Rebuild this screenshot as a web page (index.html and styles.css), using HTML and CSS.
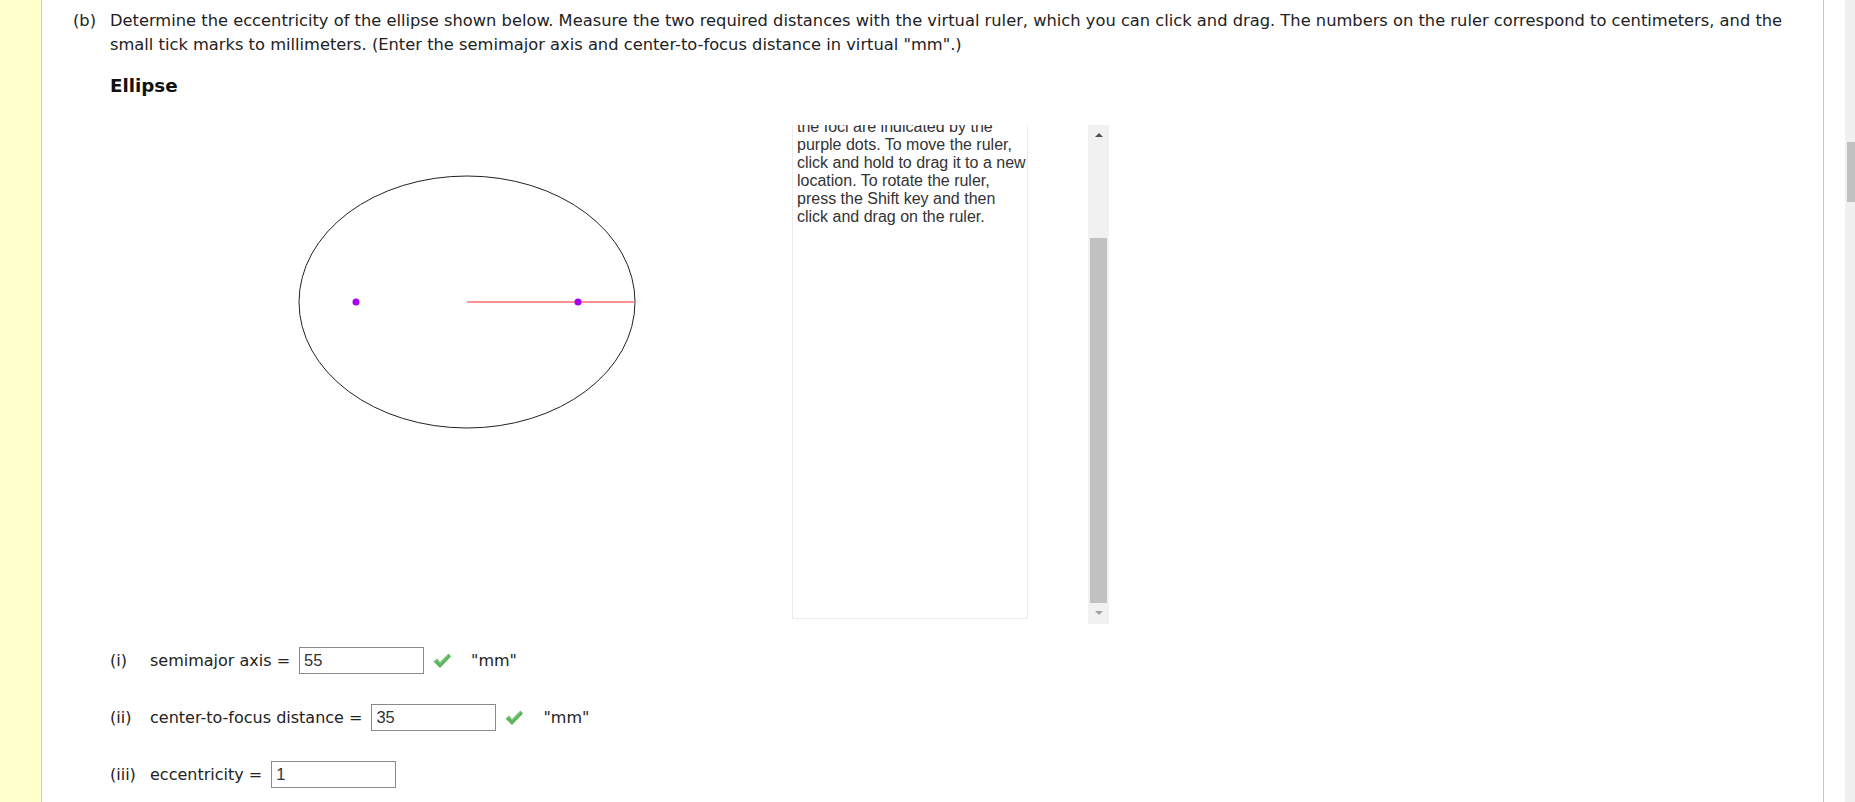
FILE: index.html
```html
<!DOCTYPE html>
<html>
<head>
<meta charset="utf-8">
<link rel="stylesheet" href="styles.css">
</head>
<body>
<div class="page">
  <div class="sidebar"></div>
  <div class="content">
    <div class="question">
      <div class="qlabel">(b)</div>
      <div class="qtext">Determine the eccentricity of the ellipse shown below. Measure the two required distances with the virtual ruler, which you can click and drag. The numbers on the ruler correspond to centimeters, and the small tick marks to millimeters. (Enter the semimajor axis and center-to-focus distance in virtual "mm".)</div>
    </div>
    <h2 class="title">Ellipse</h2>
    <div class="figure">
      <svg class="canvas" width="682" height="500" viewBox="0 0 682 500">
        <ellipse cx="357" cy="177" rx="168" ry="126" fill="none" stroke="#222" stroke-width="1"/>
        <line x1="357" y1="177" x2="525" y2="177" stroke="#ff6e6e" stroke-width="1.5"/>
        <circle cx="246" cy="177" r="3.5" fill="#a800f0"/>
        <circle cx="468" cy="177" r="3.5" fill="#a800f0"/>
      </svg>
      <div class="panel">
        <div class="panel-text">the foci are indicated by the<br>purple dots. To move the ruler,<br>click and hold to drag it to a new<br>location. To rotate the ruler,<br>press the Shift key and then<br>click and drag on the ruler.</div>
      </div>
      <div class="vscroll">
        <div class="arrow up"></div>
        <div class="track"><div class="thumb"></div></div>
        <div class="arrow down"></div>
      </div>
    </div>
    <div class="answers">
      <div class="row">
        <span class="rlabel">(i)</span>
        <span class="rtext">semimajor axis =</span>
        <span class="input">55</span>
        <svg class="check" width="20" height="18" viewBox="0 0 20 18"><path d="M1.5 9.5 L5 6.5 L8 10 L16.5 1.5 L19 4.5 L8 16 Z" fill="#5cb45c"/><path d="M2.5 9.6 L5 7.6 L8 11.2 L16.5 2.8" fill="none" stroke="#8ed48e" stroke-width="1"/></svg>
        <span class="unit">"mm"</span>
      </div>
      <div class="row">
        <span class="rlabel">(ii)</span>
        <span class="rtext">center-to-focus distance =</span>
        <span class="input">35</span>
        <svg class="check" width="20" height="18" viewBox="0 0 20 18"><path d="M1.5 9.5 L5 6.5 L8 10 L16.5 1.5 L19 4.5 L8 16 Z" fill="#5cb45c"/><path d="M2.5 9.6 L5 7.6 L8 11.2 L16.5 2.8" fill="none" stroke="#8ed48e" stroke-width="1"/></svg>
        <span class="unit">"mm"</span>
      </div>
      <div class="row">
        <span class="rlabel">(iii)</span>
        <span class="rtext">eccentricity =</span>
        <span class="input">1</span>
      </div>
    </div>
  </div>
  <div class="gutter"></div>
  <div class="pagescroll"><div class="pthumb"></div></div>
</div>
</body>
</html>
```
FILE: styles.css
```css
html, body {
  margin: 0;
  padding: 0;
  width: 1855px;
  height: 802px;
  overflow: hidden;
  background: #fff;
}
.page {
  display: flex;
  height: 802px;
  font-family: "DejaVu Sans", Verdana, sans-serif;
  font-size: 16.3px;
  color: #222;
}
.sidebar {
  width: 41px;
  background: #ffffcc;
  border-right: 1px solid #cfcfc0;
  flex: none;
}
.content {
  flex: none;
  border-right: 1px solid #c8c8c8;
  padding-left: 31px;
  box-sizing: border-box;
  width: 1782px;
}
.gutter {
  width: 21px;
  flex: none;
}
.pagescroll {
  width: 10px;
  flex: none;
  background: #f0f0f0;
  position: relative;
}
.pthumb {
  position: absolute;
  left: 2px;
  right: 0;
  top: 142px;
  height: 60px;
  background: #c1c1c1;
}
.question {
  display: flex;
  padding-top: 9px;
  padding-right: 12px;
  line-height: 24px;
}
.qlabel {
  width: 37px;
  flex: none;
}
.qtext {
  flex: 1;
}
.title {
  margin: 17px 0 0 37px;
  font-size: 18.3px;
  font-weight: bold;
  line-height: 24px;
  color: #111;
}
.figure {
  display: flex;
  align-items: flex-start;
  margin-top: 27px;
  margin-left: 37px;
}
.canvas {
  display: block;
  flex: none;
}
.panel {
  width: 236px;
  height: 494px;
  box-sizing: border-box;
  border: 1px solid #ececec;
  border-top: none;
  overflow: hidden;
  flex: none;
}
.panel-text {
  margin-top: -7px;
  padding-left: 4px;
  font-family: "Liberation Sans", Arial, sans-serif;
  font-size: 16px;
  line-height: 18px;
  color: #333;
  white-space: nowrap;
}
.vscroll {
  width: 21px;
  height: 499px;
  margin-left: 60px;
  background: #f1f1f1;
  display: flex;
  flex-direction: column;
  flex: none;
}
.arrow {
  height: 21px;
  position: relative;
  flex: none;
}
.arrow.up::after {
  content: "";
  position: absolute;
  left: 7px;
  top: 8px;
  border-left: 4px solid transparent;
  border-right: 4px solid transparent;
  border-bottom: 4px solid #505050;
}
.arrow.down::after {
  content: "";
  position: absolute;
  left: 7px;
  top: 8px;
  border-left: 4px solid transparent;
  border-right: 4px solid transparent;
  border-top: 4px solid #a3a3a3;
}
.track {
  flex: 1;
  position: relative;
}
.thumb {
  position: absolute;
  left: 2px;
  right: 2px;
  top: 92px;
  bottom: 0;
  background: #c1c1c1;
}
.answers {
  margin-top: 22px;
  margin-left: 37px;
}
.row {
  display: flex;
  align-items: center;
  height: 27px;
  margin-bottom: 30px;
  font-size: 16px;
}
.rlabel {
  width: 40px;
  flex: none;
}
.rtext {
  white-space: nowrap;
}
.input {
  display: block;
  width: 125px;
  height: 27px;
  box-sizing: border-box;
  border: 1px solid #8a8a8a;
  margin-left: 9px;
  padding-left: 4px;
  font-family: "Liberation Sans", Arial, sans-serif;
  font-size: 16.5px;
  line-height: 25px;
  color: #333;
}
.check {
  display: block;
  margin-left: 8px;
}
.unit {
  margin-left: 19px;
}
```
